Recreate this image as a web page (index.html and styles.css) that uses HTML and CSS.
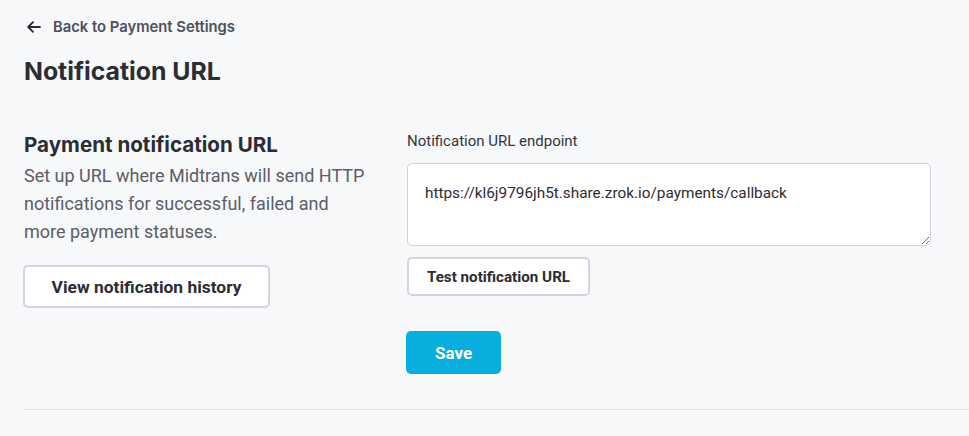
FILE: index.html
```html
<!DOCTYPE html>
<html lang="en">
<head>
<meta charset="utf-8">
<title>Notification URL</title>
<link rel="stylesheet" href="styles.css">
</head>
<body>
<div class="page">
  <a class="back" href="#">
    <svg class="back-icon" width="14" height="12" viewBox="0 0 14 12" fill="none" stroke="currentColor" stroke-width="1.8" stroke-linecap="round" stroke-linejoin="round"><path d="M13 6H1.5M6 1.2L1.2 6L6 10.8"/></svg>
    <span>Back to Payment Settings</span>
  </a>
  <h1 class="title">Notification URL</h1>
  <div class="section">
    <div class="intro">
      <h2 class="intro-title">Payment notification URL</h2>
      <p class="intro-text">Set up URL where Midtrans will send HTTP notifications for successful, failed and more payment statuses.</p>
      <button class="btn btn-outline btn-lg">View notification history</button>
    </div>
    <div class="form">
      <label class="label" for="endpoint">Notification URL endpoint</label>
      <textarea id="endpoint" class="input">https://kl6j9796jh5t.share.zrok.io/payments/callback</textarea>
      <button class="btn btn-outline btn-sm">Test notification URL</button>
      <button class="btn btn-primary">Save</button>
    </div>
  </div>
  <hr class="divider">
</div>
</body>
</html>
```
FILE: styles.css
```css
html, body {
  margin: 0;
  background: #f7f8fa;
}
body {
  font-family: Roboto, "Noto Sans", sans-serif;
  color: #2b2d33;
}
.page {
  padding: 17px 0 0 24px;
}
.back {
  display: flex;
  align-items: center;
  gap: 12px;
  height: 20px;
  padding-left: 3px;
  color: #4d505a;
  text-decoration: none;
  font-family: Inter, sans-serif;
  font-weight: 600;
  font-size: 14.8px;
  line-height: 20px;
}
.back-icon {
  color: #2b2d33;
}
.title {
  margin: 18px 0 0;
  font-family: Inter, sans-serif;
  font-weight: 700;
  font-size: 24.8px;
  line-height: 32px;
  color: #2b2d33;
}
.section {
  display: grid;
  grid-template-columns: 383px 524px;
  margin-top: 44px;
}
.intro {
  display: flex;
  flex-direction: column;
  align-items: flex-start;
}
.intro-title {
  margin: 0;
  font-family: Inter, sans-serif;
  font-weight: 700;
  font-size: 20.6px;
  line-height: 28px;
  color: #2b2d33;
}
.intro-text {
  margin: 3px 0 0;
  width: 350px;
  font-size: 18px;
  line-height: 28px;
  color: #5b5e67;
}
.btn {
  font-family: Roboto, sans-serif;
  font-weight: 700;
  border-radius: 5px;
  cursor: pointer;
  box-sizing: border-box;
}
.btn-outline {
  background: #ffffff;
  border: 2px solid #d2d5dd;
  color: #2b2d33;
}
.btn-lg {
  margin-top: 19px;
  margin-left: -1px;
  width: 247px;
  height: 43px;
  font-size: 17.4px;
}
.form {
  display: flex;
  flex-direction: column;
  align-items: flex-start;
}
.label {
  font-size: 15px;
  line-height: 20px;
  color: #33353b;
}
.input {
  margin-top: 12px;
  width: 524px;
  height: 83px;
  box-sizing: border-box;
  padding: 18px 17px;
  border: 1px solid #cfd2d8;
  border-radius: 5px;
  background: #ffffff;
  font-family: Roboto, sans-serif;
  font-size: 15.35px;
  line-height: 22px;
  color: #2b2d33;
  resize: vertical;
  outline: none;
}
.btn-sm {
  margin-top: 11px;
  width: 183px;
  height: 39px;
  font-size: 15.2px;
}
.btn-primary {
  margin-top: 35px;
  margin-left: -1px;
  width: 95px;
  height: 43px;
  border: none;
  background: #08aedd;
  color: #ffffff;
  font-size: 17px;
}
.divider {
  margin: 35px 0 0 -1px;
  border: none;
  border-top: 1px solid #e0e2ea;
  height: 0;
}
```
